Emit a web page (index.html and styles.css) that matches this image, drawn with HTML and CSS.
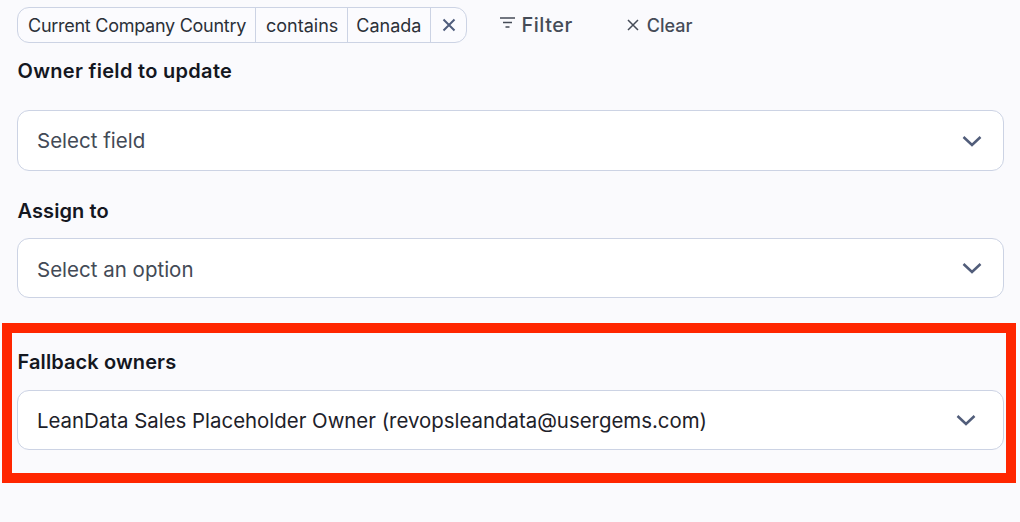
FILE: index.html
```html
<!DOCTYPE html>
<html lang="en">
<head>
  <meta charset="UTF-8" />
  <title>Owner assignment</title>
  <link rel="stylesheet" href="styles.css">
</head>
<body>

<div class="page">
  <div class="toolbar">
    <div class="chip">
      <span class="chip-part chip-name">Current Company Country</span>
      <span class="chip-part">contains</span>
      <span class="chip-part chip-value">Canada</span>
      <span class="chip-close">
        <svg width="14" height="14" viewBox="0 0 14 14"><path d="M1.5 1.5l11 11M12.5 1.5l-11 11" /></svg>
      </span>
    </div>
    <button class="tool tool-filter">
      <svg width="15" height="12" viewBox="0 0 15 12"><path d="M0 1h15M3 5.500h9M5.500 10h4" /></svg>
      Filter
    </button>
    <button class="tool tool-clear">
      <svg width="12" height="12" viewBox="0 0 12 12"><path d="M1 1l10 10M11 1L1 11" /></svg>
      Clear
    </button>
  </div>

  <div class="field field-owner">
    <label class="field-label">Owner field to update</label>
    <div class="select select-tall">
      <span class="select-text muted">Select field</span>
      <svg class="caret" width="20" height="12" viewBox="0 0 20 12"><path d="M1.5 2l8.5 8 8.500-8" /></svg>
    </div>
  </div>

  <div class="field field-assign">
    <label class="field-label">Assign to</label>
    <div class="select select-low">
      <span class="select-text muted">Select an option</span>
      <svg class="caret" width="20" height="12" viewBox="0 0 20 12"><path d="M1.5 2l8.5 8 8.500-8" /></svg>
    </div>
  </div>

  <div class="highlight">
    <label class="field-label">Fallback owners</label>
    <div class="select select-inset">
      <span class="select-text">LeanData Sales Placeholder Owner (revopsleandata@usergems.com)</span>
      <svg class="caret" width="20" height="12" viewBox="0 0 20 12"><path d="M1.5 2l8.5 8 8.500-8" /></svg>
    </div>
  </div>
</div>

</body>
</html>
```

FILE: styles.css
```css
html, body {
  margin: 0;
  padding: 0;
}
body {
  width: 1020px;
  height: 522px;
  overflow: hidden;
  background: #fafafd;
  font-family: Inter, "Noto Sans", sans-serif;
  color: #1d2129;
}
.page {
  padding: 7px 16px 0 17px;
}
.toolbar {
  display: flex;
  align-items: center;
  height: 36px;
}
.chip {
  display: flex;
  height: 36px;
  box-sizing: border-box;
  border: 1px solid #ccd3e4;
  border-radius: 12px;
  background: #fbfbfe;
  font-size: 18px;
  color: #2b3038;
}
.chip-part {
  display: flex;
  align-items: center;
  padding: 0 9px 0 10px;
  border-right: 1px solid #ccd3e4;
  white-space: nowrap;
}
.chip-name {
  letter-spacing: -0.27px;
}
.chip-value {
  padding: 0 9px 0 8px;
}
.chip-close {
  display: flex;
  align-items: center;
  justify-content: center;
  width: 35px;
}
.chip-close path {
  stroke: #4f5d7c;
  stroke-width: 2;
  fill: none;
}
.tool {
  display: flex;
  align-items: center;
  background: none;
  border: none;
  padding: 0;
  font-family: inherit;
  color: #454b57;
}
.tool path {
  stroke: #454b57;
  stroke-width: 1.5;
  fill: none;
}
.tool-filter {
  margin-left: 33px;
  gap: 6px;
  font-size: 20px;
  font-weight: 500;
  letter-spacing: 0.5px;
}
.tool-filter svg {
  margin-bottom: 4px;
}
.tool-clear {
  margin-left: 54px;
  gap: 8px;
  font-size: 18px;
  font-weight: 500;
}
.field-label {
  display: block;
  padding-left: 0.5px;
  font-size: 20px;
  font-weight: 600;
  line-height: 24px;
  letter-spacing: 0.1px;
  color: #14171f;
}
.field-owner {
  margin-top: 16px;
}
.field-owner .field-label {
  letter-spacing: 0.3px;
}
.field-owner .select {
  margin-top: 27px;
}
.field-assign {
  margin-top: 28px;
}
.select {
  display: flex;
  align-items: center;
  justify-content: space-between;
  box-sizing: border-box;
  height: 60px;
  margin-top: 15px;
  padding: 0 21px 0 19px;
  background: #fff;
  border: 1px solid #ccd3e4;
  border-radius: 12px;
}
.select-tall {
  height: 61px;
}
.select-low .select-text {
  margin-top: 2px;
}
.select-text {
  font-size: 20.5px;
  color: #1d2129;
}
.select-text.muted {
  color: #434a56;
}
.caret path {
  stroke: #515d7a;
  stroke-width: 2.500;
  fill: none;
}
.highlight {
  margin: 25px 0 0 -15px;
  padding: 17px 2px 0 5px;
  width: 1014px;
  box-sizing: border-box;
  height: 160px;
  border: 10px solid #ff2600;
}
.select-inset {
  margin-top: 16px;
  padding-right: 27px;
}
.select-inset .select-text {
  font-size: 20.4px;
  margin-top: 1px;
}
```
